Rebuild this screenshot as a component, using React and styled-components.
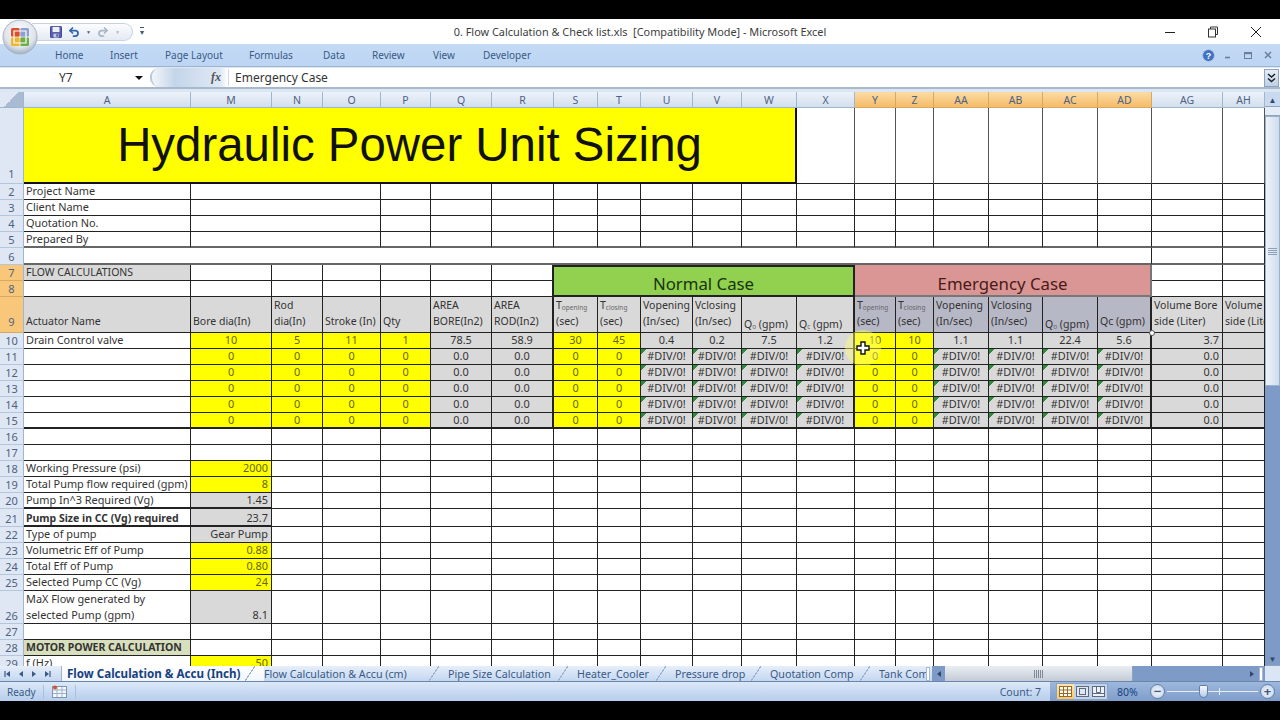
import React from "react";
import styled, { createGlobalStyle } from "styled-components";
import { Undo2, Redo2 } from "lucide-react";

const GlobalStyle = createGlobalStyle`
  html, body, #root {
    margin: 0;
    padding: 0;
    height: 100%;
    background: #000;
  }
  * { box-sizing: border-box; }
`;

const COLS = ["A", "M", "N", "O", "P", "Q", "R", "S", "T", "U", "V", "W", "X", "Y", "Z", "AA", "AB", "AC", "AD", "AG", "AH"];
const COL_W = [167, 81, 51, 58, 50, 61, 62, 44, 43, 52, 49, 55, 58, 41, 38, 55, 54, 55, 54, 71, 42];
const ROW_H = [76, 16, 16, 16, 16, 17, 16, 16, 36, 16, 16, 16, 16, 16, 16, 16, 16, 16, 16, 16, 18, 16, 16, 16, 16, 33, 16, 16, 16];
const SELECTED_COLS = ["Y", "Z", "AA", "AB", "AC", "AD"];
const FONT = `"Noto Sans", "Open Sans", sans-serif`;

const Screen = styled.div`
  width: 1280px;
  height: 720px;
  padding: 19px 0 20px;
  background: #000;
  overflow: hidden;
  font-family: ${FONT};
`;

const Excel = styled.div`
  position: relative;
  height: 681px;
  display: flex;
  flex-direction: column;
  background: #fff;
`;

const TitleBar = styled.div`
  height: 25px;
  flex: none;
  display: grid;
  grid-template-columns: 1fr auto 1fr;
  align-items: center;
  background: #fff;
`;

const QatWrap = styled.div`
  display: flex;
  align-items: center;
`;

const Qat = styled.div`
  display: flex;
  align-items: center;
  gap: 6px;
  width: 101px;
  height: 18px;
  margin-left: 32px;
  padding-left: 18px;
  border: 1px solid #c9d3df;
  border-left: none;
  border-radius: 0 10px 10px 0;
  background: linear-gradient(#fbfcfe, #e5ebf3);
`;

const Caret = styled.span`
  font-size: 5px;
  color: ${(p) => p.$color || "#4a5e78"};
`;

const QatMore = styled.span`
  margin-left: 7px;
  font-size: 8px;
  line-height: 8px;
  color: #44566e;
  border-top: 1px solid #44566e;
`;

const WindowTitle = styled.div`
  font-size: 10.9px;
  color: #3d3d3d;
  white-space: pre;
`;

const WindowButtons = styled.div`
  display: flex;
  justify-content: flex-end;
  align-items: center;
  gap: 31px;
  padding-right: 18px;
`;

const Ribbon = styled.div`
  height: 23px;
  flex: none;
  display: flex;
  align-items: center;
  padding-left: 55px;
  background: linear-gradient(#c4daf5, #bcd5f3);
  border-bottom: 1px solid #9db4d0;
`;

const RibbonTab = styled.div`
  width: ${(p) => p.$w}px;
  flex: none;
  font-size: 10px;
  color: #3a5a86;
`;

const RibbonRight = styled.div`
  margin-left: auto;
  display: flex;
  align-items: center;
  gap: 12px;
  padding-right: 8px;
`;

const HelpIcon = styled.svg`
  margin-right: -3px;
`;

const FormulaBar = styled.div`
  height: 22px;
  flex: none;
  display: flex;
  align-items: center;
  background: #fff;
  border-top: 1px solid #dfe6ef;
  border-bottom: 2px solid #a9b8ca;
`;

const NameBox = styled.div`
  width: 148px;
  flex: none;
  display: flex;
  justify-content: space-between;
  align-items: center;
  padding: 0 5px 0 59px;
  font-size: 12px;
  color: #333;
`;

const DownArrow = styled.span`
  width: 0;
  height: 0;
  border-left: 4px solid transparent;
  border-right: 4px solid transparent;
  border-top: 4px solid #111;
`;

const FxPill = styled.div`
  width: 78px;
  height: 19px;
  flex: none;
  margin-left: 2px;
  display: flex;
  justify-content: flex-end;
  align-items: center;
  padding-right: 7px;
  border-left: 2px solid #b8c8dc;
  border-radius: 9px 0 0 9px;
  background: linear-gradient(90deg, #f3f6fa, #c4d5ea 30%, #dfe9f5 90%, #fff);
  font: italic bold 12px "Liberation Serif", serif;
  color: #555;
`;

const FormulaText = styled.div`
  flex: 1;
  padding-left: 6px;
  font-size: 12px;
  color: #333;
  border-left: 1px solid #cfd8e4;
`;

const Expand = styled.div`
  width: 15px;
  height: 18px;
  flex: none;
  margin-right: 1px;
  display: flex;
  align-items: center;
  justify-content: center;
  background: linear-gradient(#e6eef8, #bcd0e8);
  border: 1px solid #8ea3bd;
`;

const Gap = styled.div`
  height: 3px;
  flex: none;
  background: #dbe6f4;
`;

const Workspace = styled.div`
  height: 574px;
  flex: none;
  display: flex;
`;

const Sheet = styled.div`
  position: relative;
  width: 1265px;
  height: 574px;
  overflow: hidden;
  display: grid;
  grid-template-columns: 24px ${COL_W.map((w) => w + "px").join(" ")};
  grid-template-rows: 16px ${ROW_H.map((h) => h + "px").join(" ")};
`;

const Corner = styled.div`
  background: linear-gradient(135deg, #dfe8f4 50%, #a9bbd2 50%);
  border-right: 1px solid #9eb6ce;
  border-bottom: 1px solid #9eb6ce;
`;

const ColHead = styled.div`
  display: flex;
  align-items: center;
  justify-content: center;
  font-size: 10.5px;
  color: #4d6282;
  background: ${(p) =>
    p.$on ? "linear-gradient(#fbdca6, #f6bb68)" : "linear-gradient(#edf2f9, #d3dfee)"};
  border-right: 1px solid ${(p) => (p.$on ? "#d9a860" : "#9eb6ce")};
  border-bottom: 1px solid ${(p) => (p.$on ? "#d9a860" : "#9eb6ce")};
`;

const RowHead = styled.div`
  display: flex;
  align-items: flex-end;
  justify-content: center;
  padding-bottom: ${(p) => p.$pb || 0}px;
  line-height: 15px;
  font-size: 11px;
  color: #4d6282;
  background: ${(p) => (p.$on ? "#f9c77a" : "#dee7f3")};
  border-right: 1px solid #9eb6ce;
  border-bottom: 1px solid ${(p) => (p.$on ? "#d9a860" : "#b3c6dc")};
`;

const bgs = {
  blank: "#fff",
  title: "#ffff00",
  input: "#ffff00",
  calc: "#d9d9d9",
  head: "#d9d9d9",
  headAlt: "#b7b8c5",
  olive: "#d8dfbc",
  normal: "#92d050",
  emergency: "#da9694",
};

const Cell = styled.div`
  grid-column: span ${(p) => p.$cols || 1};
  grid-row: span ${(p) => p.$rows || 1};
  display: flex;
  flex-direction: column;
  justify-content: flex-end;
  align-items: ${(p) =>
    p.$align === "center" ? "center" : p.$align === "right" ? "flex-end" : "flex-start"};
  padding: 0 ${(p) => (p.$align === "right" ? 3 : 2)}px ${(p) => p.$pb || 0}px 2px;
  overflow: hidden;
  white-space: nowrap;
  font-size: ${(p) => p.$fs || (p.$bold ? 10.5 : 10.9)}px;
  line-height: ${(p) => (p.$bb && p.$bb.startsWith("2") ? 14 : 16)}px;
  font-weight: ${(p) => (p.$bold ? 700 : 400)};
  color: ${(p) => (p.$kind === "input" ? "#66640c" : "#333")};
  background: ${(p) =>
    p.$err
      ? `linear-gradient(135deg, #2f8a3c 4px, transparent 4px), ${bgs.calc}`
      : bgs[p.$kind || "blank"]};
  border-right: ${(p) => p.$br || "1px solid #222"};
  border-bottom: ${(p) => p.$bb || "1px solid #222"};
  box-shadow: ${(p) => (p.$kind === "normal" ? "inset 0 2px 0 #222" : "none")};
`;

const Banner = styled.div`
  font: 47.4px/76px "Liberation Sans", Arial, sans-serif;
  color: #111;
  align-self: center;
  margin-bottom: -1px;
`;

const CaseTitle = styled.div`
  font-size: 16.8px;
  line-height: 20px;
  align-self: center;
  margin-bottom: 1px;
  color: ${(p) => p.$color};
`;

const Small = styled.span`
  font-size: 6.5px;
  line-height: 0;
  vertical-align: -1px;
  color: #666;
`;

const Cursor = styled.div`
  position: absolute;
  left: 845px;
  top: 238px;
  width: 36px;
  height: 36px;
  border-radius: 50%;
  background: rgba(255, 250, 120, 0.45);
  display: flex;
  align-items: center;
  justify-content: center;
`;

const Handle = styled.div`
  position: absolute;
  left: 1149px;
  top: 238px;
  width: 6px;
  height: 6px;
  border: 1px solid #555;
  border-radius: 50%;
  background: #fff;
`;

const VScroll = styled.div`
  width: 15px;
  flex: none;
  display: flex;
  flex-direction: column;
  align-items: center;
  background: #7e9ac6;
`;

const VScrollCap = styled.div`
  width: 100%;
  height: ${(p) => p.$h}px;
  flex: none;
  text-align: center;
  font-size: 8px;
  line-height: ${(p) => p.$h}px;
  color: #2f4a6e;
  background: ${(p) => p.$bg || "#c9d9ee"};
  border-bottom: 1px solid #8ea3bd;
`;

const VThumb = styled.div`
  width: 100%;
  height: 270px;
  flex: none;
  display: flex;
  align-items: center;
  justify-content: center;
  background: linear-gradient(90deg, #eef3fa, #cfdcee);
  border: 1px solid #9db0c8;
`;

const Grip = styled.div`
  width: ${(p) => p.$w}px;
  height: ${(p) => p.$h}px;
  background: ${(p) =>
    p.$horizontal
      ? "repeating-linear-gradient(90deg, #7f8a98 0 1px, transparent 1px 2px)"
      : "repeating-linear-gradient(#8fa0b6 0 1px, transparent 1px 2px)"};
`;

const VTrack = styled.div`
  flex: 1;
  width: 100%;
`;

const TabRow = styled.div`
  height: 16px;
  flex: none;
  display: flex;
  align-items: center;
  background: linear-gradient(#e6eefa, #c4d7f0);
  border-bottom: 1px solid #6a86ad;
`;

const SheetNav = styled.div`
  width: 62px;
  height: 100%;
  flex: none;
  display: flex;
  align-items: center;
  gap: 5px;
  padding-left: 4px;
  border-right: 1px solid #9db3cf;
`;

const slant =
  "linear-gradient(to bottom right, transparent 46%, #9db3cf 46%, #9db3cf 54%, transparent 54%) no-repeat right 9px center / 10px 100%";

const SheetTab = styled.div`
  width: ${(p) => p.$w}px;
  height: 100%;
  flex: none;
  display: flex;
  align-items: center;
  overflow: hidden;
  white-space: nowrap;
  font-size: ${(p) => (p.$active ? 11.6 : 10.7)}px;
  font-weight: ${(p) => (p.$active ? 700 : 400)};
  color: ${(p) => (p.$active ? "#17417f" : "#3a5a86")};
  background: ${(p) =>
    p.$active ? `${slant}, linear-gradient(#fff, #f2f6fc)` : p.$last ? "none" : slant};
  padding-left: ${(p) => (p.$active ? 5 : 0)}px;
`;

const SplitBar = styled.div`
  width: 4px;
  height: 14px;
  flex: none;
  margin: 0 2px 0 0;
  background: #fff;
  border: 1px solid #a9b8ca;
`;

const HScroll = styled.div`
  flex: 1;
  height: 100%;
  display: flex;
  align-items: center;
  background: #7e9ac6;
`;

const HArrow = styled.div`
  width: ${(p) => p.$w}px;
  flex: none;
  display: flex;
  justify-content: center;
`;

const HThumb = styled.div`
  width: 188px;
  height: 100%;
  flex: none;
  display: flex;
  align-items: center;
  justify-content: center;
  background: linear-gradient(#eaeef3, #c3cbd6);
  border-right: 1px solid #8ea3bd;
`;

const HTrack = styled.div`
  flex: 1;
`;

const HTail = styled.div`
  width: 15px;
  flex: none;
  height: 100%;
  background: #dbe6f4;
`;

const StatusBar = styled.div`
  height: 19px;
  flex: none;
  display: flex;
  align-items: center;
  background: linear-gradient(#dce8f8, #b6cdec);
`;

const Ready = styled.div`
  width: 44px;
  flex: none;
  padding-left: 7px;
  font-size: 10px;
  color: #3a5a86;
  border-right: 1px solid #a9c0de;
`;

const SheetIcon = styled.div`
  width: 32px;
  flex: none;
  display: flex;
  justify-content: center;
  border-right: 1px solid #a9c0de;
`;

const StatusCount = styled.div`
  margin-left: auto;
  padding-right: 9px;
  font-size: 10.5px;
  color: #3a5a86;
`;

const StatusRight = styled.div`
  width: 230px;
  height: 100%;
  flex: none;
  display: flex;
  align-items: center;
  padding: 0 5px 0 6px;
  background: linear-gradient(#9db8dd, #7f9dca);
`;

const ViewButtons = styled.div`
  display: flex;
  width: 52px;
  height: 17px;
  flex: none;
  background: #c2d3ea;
  border: 1px solid #8aa3c6;
`;

const ViewButton = styled.div`
  flex: 1;
  display: flex;
  align-items: center;
  justify-content: center;
  background: ${(p) => (p.$on ? "linear-gradient(#fde6b0, #f6c869)" : "transparent")};
`;

const ZoomLevel = styled.div`
  width: 42px;
  flex: none;
  padding-left: 9px;
  font-size: 10.5px;
  color: #17417f;
`;

const ZoomBtn = styled.div`
  width: 15px;
  height: 15px;
  flex: none;
  border-radius: 50%;
  border: 1px solid #5f7ea8;
  background: radial-gradient(circle, #f4f8fd, #bccfe8);
  text-align: center;
  font-size: 13px;
  font-weight: 700;
  line-height: 12px;
  color: #41597a;
`;

const ZoomTrack = styled.div`
  flex: 1;
  height: 1px;
  margin: 0 2px;
  display: flex;
  justify-content: center;
  align-items: center;
  gap: 7px;
  background: #e4edf8;
`;

const ZoomThumb = styled.div`
  width: 9px;
  height: 13px;
  margin-right: 4px;
  background: linear-gradient(#f6f9fd, #b9cbe4);
  border: 1px solid #5f7ea8;
  border-radius: 2px 2px 5px 5px;
`;

const ZoomTick = styled.div`
  width: 1px;
  height: 7px;
  margin-right: 6px;
  background: #e4edf8;
`;

const OrbSvg = styled.svg`
  position: absolute;
  left: 2px;
  top: 0;
`;

function OfficeButton() {
  return (
    <OrbSvg width="36" height="36" viewBox="0 0 36 36">
      <defs>
        <radialGradient id="orb" cx="50%" cy="35%" r="65%">
          <stop offset="0%" stopColor="#fbfcfe" />
          <stop offset="70%" stopColor="#dfe4ea" />
          <stop offset="100%" stopColor="#9fb0c4" />
        </radialGradient>
      </defs>
      <circle cx="18" cy="18" r="17" fill="url(#orb)" stroke="#a7b4c4" />
      <rect x="9" y="9" width="9" height="9" rx="1.5" fill="#d9512c" />
      <rect x="18" y="9" width="9" height="9" rx="1.5" fill="#8c9fd0" />
      <rect x="9" y="18" width="9" height="9" rx="1.5" fill="#efb52e" />
      <rect x="18" y="18" width="9" height="9" rx="1.5" fill="#6fae45" />
      <path d="M12 12h12v12H12z" fill="none" stroke="#fff" strokeWidth="1.2" />
      <path d="M18 9v18M9 18h18" stroke="#fff" strokeWidth="0.8" opacity="0.8" />
    </OrbSvg>
  );
}

function SaveIcon() {
  return (
    <svg width="12" height="12" viewBox="0 0 14 14">
      <rect x="0.5" y="0.5" width="13" height="13" rx="1" fill="#5a5fb0" stroke="#2d3380" />
      <rect x="3" y="1" width="8" height="6" fill="#eef1fa" />
      <rect x="4" y="9" width="6" height="4.5" fill="#c3c8e6" />
      <rect x="7.5" y="9.5" width="1.5" height="3" fill="#3a4090" />
    </svg>
  );
}

function WindowIcons() {
  return (
    <WindowButtons>
      <svg width="12" height="12" viewBox="0 0 12 12">
        <path d="M1 6.5h10" stroke="#222" strokeWidth="1" />
      </svg>
      <svg width="12" height="12" viewBox="0 0 12 12" fill="none" stroke="#333">
        <path d="M3.5 3V1h7v7.5H8.5" />
        <rect x="1.5" y="3" width="7" height="8" />
      </svg>
      <svg width="12" height="12" viewBox="0 0 12 12" stroke="#222">
        <path d="M1 1l10 10M11 1L1 11" />
      </svg>
    </WindowButtons>
  );
}

function RibbonIcons() {
  return (
    <RibbonRight>
      <HelpIcon width="13" height="13" viewBox="0 0 13 13">
        <circle cx="6.5" cy="6.5" r="6" fill="#3f73c4" stroke="#b9cbe4" />
        <text x="6.5" y="10" textAnchor="middle" fontSize="9" fontWeight="700" fill="#fff" fontFamily="Liberation Sans">?</text>
      </HelpIcon>
      <svg width="8" height="8" viewBox="0 0 8 8">
        <path d="M1 6.5h5" stroke="#6c7f99" strokeWidth="1.6" />
      </svg>
      <svg width="8" height="8" viewBox="0 0 8 8" fill="none" stroke="#6c7f99">
        <rect x="0.5" y="1.5" width="7" height="6" />
        <path d="M0.5 2.5h7" strokeWidth="1.4" />
      </svg>
      <svg width="8" height="8" viewBox="0 0 8 8" stroke="#6c7f99" strokeWidth="1.5">
        <path d="M1 1l6 6M7 1L1 7" />
      </svg>
    </RibbonRight>
  );
}

// arrow pointing left or right, with an optional end bar
function NavArrow({ dir, bar, color = "#3a5a86" }) {
  const d = dir === "left" ? "M6 1v6L2 4z" : "M2 1v6l4-3z";
  const barD = dir === "left" ? "M1 1v6" : "M7 1v6";
  return (
    <svg width="8" height="8" viewBox="0 0 8 8">
      <path d={d} fill={color} />
      {bar && <path d={barD} stroke={color} strokeWidth="1.2" />}
    </svg>
  );
}

const sub = (a, b, c) => (
  <span>
    {a}
    <Small>{b}</Small>
    {c}
  </span>
);

const headLabels = [
  { t: ["Actuator Name"] },
  { t: ["Bore dia(In)"] },
  { t: ["Rod", "dia(In)"] },
  { t: ["Stroke (In)"] },
  { t: ["Qty"] },
  { t: ["AREA", "BORE(In2)"] },
  { t: ["AREA", "ROD(In2)"] },
  { t: [sub("T", "opening"), "(sec)"] },
  { t: [sub("T", "closing"), "(sec)"] },
  { t: ["Vopening", "(In/sec)"] },
  { t: ["Vclosing", "(In/sec)"] },
  { t: [sub("Q", "o", " (gpm)")], low: true },
  { t: [sub("Q", "c", " (gpm)")], low: true },
  { t: [sub("T", "opening"), "(sec)"], alt: true },
  { t: [sub("T", "closing"), "(sec)"], alt: true },
  { t: ["Vopening", "(In/sec)"], alt: true },
  { t: ["Vclosing", "(In/sec)"], alt: true },
  { t: [sub("Q", "o", " (gpm)")], alt: true, low: true },
  { t: ["Qc (gpm)"], alt: true },
  { t: ["Volume Bore", "side (Liter)"] },
  { t: ["Volume", "side (Liter)"] },
];

const dataRow = (name, vals, last) => {
  const bb = last ? "2px solid #222" : undefined;
  return COLS.map((c, i) => {
    if (i === 0) return <Cell key={c} $bb={bb}>{name}</Cell>;
    const v = vals[i - 1];
    const isInput = (i >= 1 && i <= 4) || i === 7 || i === 8 || i === 13 || i === 14;
    const right = c === "AG" || c === "AH";
    const br = c === "R" || c === "X" || c === "AD" ? "2px solid #222" : undefined;
    return (
      <Cell
        key={c}
        $kind={isInput ? "input" : "calc"}
        $err={v === "#DIV/0!"}
        $align={right ? "right" : "center"}
        $br={br}
        $bb={bb}
      >
        {v}
      </Cell>
    );
  });
};

const errs = Array(4).fill("#DIV/0!");
const row10 = [10, 5, 11, 1, "78.5", "58.9", 30, 45, "0.4", "0.2", "7.5", "1.2", 10, 10, "1.1", "1.1", "22.4", "5.6", "3.7", ""];
const rowZero = [0, 0, 0, 0, "0.0", "0.0", 0, 0, ...errs, 0, 0, ...errs, "0.0", ""];

const blanks = (from, to, props) =>
  COLS.slice(from, to).map((c) => <Cell key={c} {...props} />);

const pumpRows = [
  { n: 18, a: "Working Pressure (psi)", v: 2000, k: "input" },
  { n: 19, a: "Total Pump flow required (gpm)", v: 8, k: "input" },
  { n: 20, a: "Pump In^3 Required (Vg)", v: "1.45", k: "calc", bb: "2px solid #222" },
  { n: 21, a: "Pump Size in CC (Vg) required", v: "23.7", k: "calc", bold: true, bb: "2px solid #222" },
  { n: 22, a: "Type of pump", v: "Gear Pump", k: "calc" },
  { n: 23, a: "Volumetric Eff of Pump", v: "0.88", k: "input" },
  { n: 24, a: "Total Eff of Pump", v: "0.80", k: "input" },
  { n: 25, a: "Selected Pump CC (Vg)", v: 24, k: "input" },
  { n: 26, a: ["MaX Flow generated by", "selected Pump (gpm)"], v: "8.1", k: "calc" },
  { n: 27, a: "", v: "", k: "blank" },
  { n: 28, a: "MOTOR POWER CALCULATION", v: "", k: "blank", bold: true, olive: true },
  { n: 29, a: "f (Hz)", v: 50, k: "input" },
];

// row header sits in its own column, so cells are pushed row by row
function buildGrid() {
  const rowCells = [];

  const cells = (n, content) => {
    rowCells.push(
      <RowHead key={"rh" + n} $on={n >= 7 && n <= 9} $pb={n === 1 ? 2 : n === 9 ? 3 : 0}>
        {n}
      </RowHead>,
      <React.Fragment key={"row" + n}>{content}</React.Fragment>
    );
  };

  cells(
    1,
    <>
      <Cell $kind="title" $cols={12} $br="2px solid #111" $bb="2px solid #111">
        <Banner>Hydraulic Power Unit Sizing</Banner>
      </Cell>
      {blanks(12, 21, { $br: "1px solid #555" })}
    </>
  );

  ["Project Name", "Client Name", "Quotation No.", "Prepared By"].forEach((t, i) => {
    const bb = i === 3 ? "2px solid #666" : undefined;
    cells(
      i + 2,
      <>
        <Cell $bb={bb}>{t}</Cell>
        <Cell $cols={3} $bb={bb} />
        {blanks(4, 21, { $bb: bb })}
      </>
    );
  });

  cells(
    6,
    <>
      <Cell $cols={19} $bb="2px solid #666" />
      <Cell $bb="2px solid #666" />
      <Cell $bb="2px solid #666" />
    </>
  );

  cells(
    7,
    <>
      <Cell $kind="calc" $fs={10.5}>FLOW CALCULATIONS</Cell>
      {blanks(1, 6)}
      <Cell $br="2px solid #222" />
      <Cell $kind="normal" $cols={6} $rows={2} $br="2px solid #222" $bb="2px solid #222">
        <CaseTitle $color="#17340c">Normal Case</CaseTitle>
      </Cell>
      <Cell $kind="emergency" $cols={6} $rows={2} $br="2px solid #777" $bb="2px solid #777">
        <CaseTitle $color="#4a1a18">Emergency Case</CaseTitle>
      </Cell>
      <Cell />
      <Cell />
    </>
  );

  cells(
    8,
    <>
      {blanks(0, 6)}
      <Cell $br="2px solid #222" />
      <Cell />
      <Cell />
    </>
  );

  cells(
    9,
    headLabels.map((h, i) => (
      <Cell
        key={i}
        $kind={h.alt ? "headAlt" : "head"}
        $fs={10.5}
        $pb={h.low ? 0 : 3}
        $br={i === 6 || i === 12 || i === 18 ? "2px solid #222" : undefined}
      >
        {h.t.map((l, j) => (
          <span key={j}>{l}</span>
        ))}
      </Cell>
    ))
  );

  cells(10, dataRow("Drain Control valve", row10));
  [11, 12, 13, 14, 15].forEach((n) => cells(n, dataRow("", rowZero, n === 15)));
  cells(16, blanks(0, 21));
  cells(17, blanks(0, 21));

  pumpRows.forEach((r) => {
    cells(
      r.n,
      <>
        <Cell $bold={r.bold} $kind={r.olive ? "olive" : "blank"} $bb={r.bb}>
          {[].concat(r.a).map((l, j) => (
            <span key={j}>{l}</span>
          ))}
        </Cell>
        <Cell $kind={r.k} $align="right" $bb={r.bb}>
          {r.v}
        </Cell>
        {blanks(2, 21)}
      </>
    );
  });

  return rowCells;
}

export default function App() {
  return (
    <Screen>
      <GlobalStyle />
      <Excel>
        <TitleBar>
          <QatWrap>
            <Qat>
              <SaveIcon />
              <Undo2 size={12} color="#2f64b0" strokeWidth={3.5} />
              <Caret>▼</Caret>
              <Redo2 size={12} color="#a9b6c6" strokeWidth={3.5} />
              <Caret $color="#a9b6c6">▼</Caret>
            </Qat>
            <QatMore>▾</QatMore>
          </QatWrap>
          <WindowTitle>0. Flow Calculation &amp; Check list.xls  [Compatibility Mode] - Microsoft Excel</WindowTitle>
          <WindowIcons />
        </TitleBar>
        <Ribbon>
          <RibbonTab $w={55}>Home</RibbonTab>
          <RibbonTab $w={55}>Insert</RibbonTab>
          <RibbonTab $w={84}>Page Layout</RibbonTab>
          <RibbonTab $w={74}>Formulas</RibbonTab>
          <RibbonTab $w={49}>Data</RibbonTab>
          <RibbonTab $w={61}>Review</RibbonTab>
          <RibbonTab $w={50}>View</RibbonTab>
          <RibbonTab $w={60}>Developer</RibbonTab>
          <RibbonIcons />
        </Ribbon>
        <FormulaBar>
          <NameBox>
            Y7
            <DownArrow />
          </NameBox>
          <FxPill>fx</FxPill>
          <FormulaText>Emergency Case</FormulaText>
          <Expand>
            <svg width="9" height="10" viewBox="0 0 9 10" fill="none" stroke="#222" strokeWidth="1.5">
              <path d="M1 1l3.5 3L8 1M1 5.5l3.5 3L8 5.5" />
            </svg>
          </Expand>
        </FormulaBar>
        <Gap />
        <Workspace>
          <Sheet>
            <Corner />
            {COLS.map((c) => (
              <ColHead key={c} $on={SELECTED_COLS.includes(c)}>
                {c}
              </ColHead>
            ))}
            {buildGrid()}
            <Cursor>
              <svg width="14" height="14" viewBox="0 0 14 14">
                <path
                  d="M5 1h4v4h4v4H9v4H5V9H1V5h4z"
                  fill="#fff"
                  stroke="#111"
                  strokeWidth="1.4"
                />
              </svg>
            </Cursor>
            <Handle />
          </Sheet>
          <VScroll>
            <VScrollCap $h={15}>▲</VScrollCap>
            <VScrollCap $h={9} $bg="#e4ecf7" />
            <VThumb>
              <Grip $w={9} $h={7} />
            </VThumb>
            <VTrack />
            <VScrollCap $h={15} $bg="#7e9ac6">▼</VScrollCap>
          </VScroll>
        </Workspace>
        <TabRow>
          <SheetNav>
            <NavArrow dir="left" bar />
            <NavArrow dir="left" />
            <NavArrow dir="right" />
            <NavArrow dir="right" bar />
          </SheetNav>
          <SheetTab $w={202} $active>Flow Calculation &amp; Accu (Inch)</SheetTab>
          <SheetTab $w={184}>Flow Calculation &amp; Accu (cm)</SheetTab>
          <SheetTab $w={129}>Pipe Size Calculation</SheetTab>
          <SheetTab $w={98}>Heater_Cooler</SheetTab>
          <SheetTab $w={95}>Pressure drop</SheetTab>
          <SheetTab $w={109}>Quotation Comp</SheetTab>
          <SheetTab $w={47} $last>Tank Comp</SheetTab>
          <SplitBar />
          <HScroll>
            <HArrow $w={13}>
              <NavArrow dir="left" color="#2f4a6e" />
            </HArrow>
            <HThumb>
              <Grip $w={9} $h={8} $horizontal />
            </HThumb>
            <HTrack />
            <HArrow $w={14}>
              <NavArrow dir="right" color="#2f4a6e" />
            </HArrow>
            <SplitBar />
            <HTail />
          </HScroll>
        </TabRow>
        <StatusBar>
          <Ready>Ready</Ready>
          <SheetIcon>
            <svg width="15" height="13" viewBox="0 0 15 13">
              <rect x="0.5" y="1.5" width="14" height="11" fill="#f4f7fc" stroke="#7f95b4" />
              <path d="M1 5h13M1 8.5h13M5 2v10M10 2v10" stroke="#9db0c8" />
              <circle cx="3" cy="2.5" r="2" fill="#d9512c" />
            </svg>
          </SheetIcon>
          <StatusCount>Count: 7</StatusCount>
          <StatusRight>
            <ViewButtons>
              <ViewButton $on>
                <svg width="13" height="11" viewBox="0 0 13 11" fill="#fff" stroke="#9a6a20">
                  <rect x="0.5" y="0.5" width="12" height="10" />
                  <path d="M0.5 4h12M0.5 7.5h12M4.5 0.5v10M8.5 0.5v10" fill="none" />
                </svg>
              </ViewButton>
              <ViewButton>
                <svg width="13" height="11" viewBox="0 0 13 11" fill="#dfe6f0" stroke="#5d6b80">
                  <rect x="0.5" y="0.5" width="12" height="10" />
                  <rect x="3.5" y="2.5" width="6" height="6" />
                </svg>
              </ViewButton>
              <ViewButton>
                <svg width="13" height="11" viewBox="0 0 13 11" fill="#eef2f8" stroke="#5d6b80">
                  <rect x="0.5" y="0.5" width="12" height="10" />
                  <path d="M4.5 0.5v6h4v-6M0.5 7.5h12" fill="none" />
                </svg>
              </ViewButton>
            </ViewButtons>
            <ZoomLevel>80%</ZoomLevel>
            <ZoomBtn>−</ZoomBtn>
            <ZoomTrack>
              <ZoomThumb />
              <ZoomTick />
            </ZoomTrack>
            <ZoomBtn>+</ZoomBtn>
          </StatusRight>
        </StatusBar>
        <OfficeButton />
      </Excel>
    </Screen>
  );
}
